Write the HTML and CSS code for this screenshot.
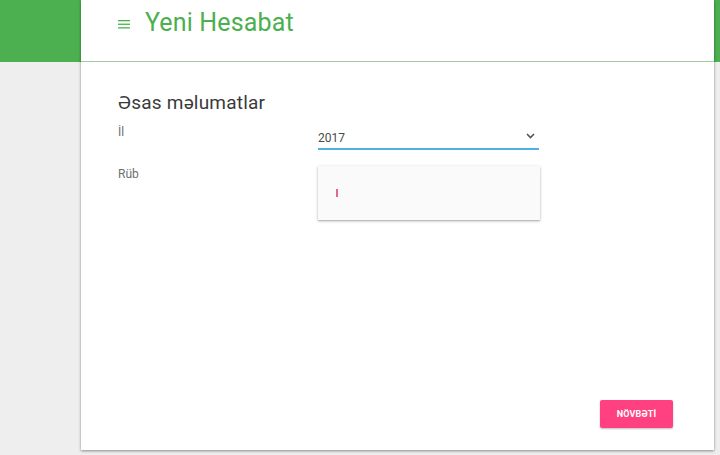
FILE: index.html
```html
<!DOCTYPE html>
<html>
<head>
<meta charset="utf-8">
<link rel="stylesheet" href="styles.css">
</head>
<body>
<div class="page">
  <div class="card">
    <header class="head">
      <span class="menu" aria-hidden="true">
        <svg width="12" height="9" viewBox="0 0 12 9"><rect x="0" y="0" width="12" height="1.3" fill="#4caf50"/><rect x="0" y="3.6" width="12" height="1.3" fill="#4caf50"/><rect x="0" y="7.2" width="12" height="1.3" fill="#4caf50"/></svg>
      </span>
      <h1 class="title">Yeni Hesabat</h1>
    </header>
    <section class="body">
      <h2 class="section">Əsas məlumatlar</h2>
      <div class="row">
        <label class="label">İl</label>
        <div class="select">
          <span class="value">2017</span>
          <svg class="chev" width="9" height="6" viewBox="0 0 9 6"><path d="M1 1 L4.5 4.5 L8 1" fill="none" stroke="#555" stroke-width="1.6"/></svg>
        </div>
      </div>
      <div class="row row2">
        <label class="label">Rüb</label>
        <div class="menu-panel"><span class="caret"></span></div>
      </div>
      <div class="actions">
        <button class="btn">NÖVBƏTİ</button>
      </div>
    </section>
  </div>
</div>
</body>
</html>
```
FILE: styles.css
```css
html, body { margin: 0; padding: 0; }
body {
  width: 720px;
  height: 455px;
  overflow: hidden;
  font-family: Roboto, "Liberation Sans", sans-serif;
  background: linear-gradient(to bottom, #4caf50 0, #4caf50 62px, #eeeeee 62px, #eeeeee 100%);
}
.page { padding-left: 81px; }
.card {
  width: 633px;
  height: 450px;
  background: #fff;
  box-shadow: 0 1px 3px rgba(0,0,0,0.3), 0 1px 2px rgba(0,0,0,0.15);
  display: flex;
  flex-direction: column;
}
.head {
  height: 62px;
  box-sizing: border-box;
  border-bottom: 1px solid #a3cca3;
  display: flex;
  align-items: center;
  padding-left: 37px;
  padding-bottom: 17px;
}
.menu { display: flex; margin-right: 15px; margin-top: 4px; }
.title {
  margin: 0;
  font-weight: 400;
  font-size: 25px;
  color: #4caf50;
  letter-spacing: 0.15px;
}
.body {
  flex: 1;
  padding: 29px 37px 20px 37px;
  display: flex;
  flex-direction: column;
}
.section {
  margin: 0;
  font-weight: 400;
  font-size: 19px;
  color: #3a3a3a;
  line-height: 24px;
  letter-spacing: 0.2px;
}
.row { display: flex; margin-top: 8px; }
.label {
  width: 200px;
  font-size: 12px;
  color: #6f6f6f;
  padding-top: 2px;
}
.select {
  width: 221px;
  height: 22px;
  box-sizing: border-box;
  border-bottom: 2px solid #4ab3e3;
  display: flex;
  justify-content: space-between;
  align-items: flex-start;
  margin-top: 5px;
}
.value { font-size: 12px; color: #4a4a4a; padding-top: 3px; }
.chev { margin-top: 5px; margin-right: 4px; }
.row2 { margin-top: 0; }
.row2 .label { padding-top: 17px; }
.menu-panel {
  width: 222px;
  height: 54px;
  margin-top: 16px;
  background: #fafafa;
  box-shadow: 0 1px 3px rgba(0,0,0,0.25), 0 1px 1px rgba(0,0,0,0.12);
  display: flex;
  align-items: center;
  padding-left: 18px;
  box-sizing: border-box;
}
.caret { width: 2px; height: 8px; margin-top: 0; background: #e06b86; }
.actions {
  margin-top: auto;
  display: flex;
  justify-content: flex-end;
  padding-right: 4px;
  padding-bottom: 2px;
}
.btn {
  border: none;
  background: #ff4081;
  color: #fff;
  font-family: Roboto, "Liberation Sans", sans-serif;
  font-weight: 700;
  font-size: 9px;
  height: 28px;
  width: 73px;
  border-radius: 2px;
  box-shadow: 0 1px 2px rgba(0,0,0,0.25);
  padding: 0;
  letter-spacing: 0.2px;
}
```
